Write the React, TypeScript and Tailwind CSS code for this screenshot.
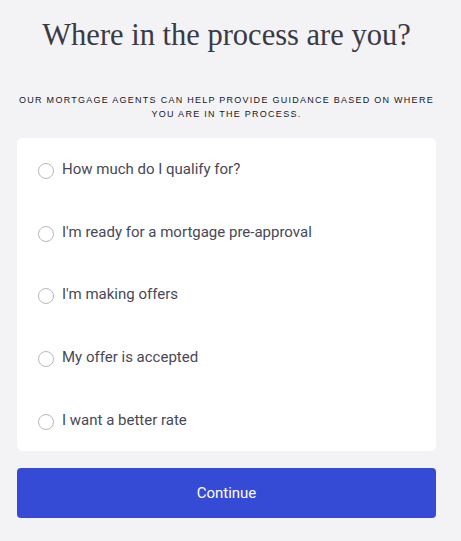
const options = [
  'How much do I qualify for?',
  "I'm ready for a mortgage pre-approval",
  "I'm making offers",
  'My offer is accepted',
  'I want a better rate',
];

export default function App() {
  return (
    <div className="min-h-[541px] w-full bg-[#f3f3f6] pl-[17px] pr-[25px] pt-[15px] pb-[23px]">
      <h1
        className="text-center text-[30.5px] leading-[40px] text-[#3b3a44]"
        style={{ fontFamily: '"Liberation Serif", serif' }}
      >
        Where in the process are you?
      </h1>

      <p
        className="mx-auto mt-[38px] text-center text-[9px] leading-[14px] tracking-[0.14em] text-[#16161c]"
        style={{ fontFamily: '"Liberation Sans", sans-serif' }}
      >
        OUR MORTGAGE AGENTS CAN HELP PROVIDE GUIDANCE BASED ON WHERE YOU ARE IN THE PROCESS.
      </p>

      <div className="mt-[17px] rounded-md bg-white" style={{ fontFamily: 'Roboto, sans-serif' }}>
        {options.map((o) => (
          <label key={o} className="flex h-[62.6px] items-center gap-[8px] pl-[21px]">
            <span className="mt-[4px] h-[16px] w-[16px] rounded-full border border-[#b8b8c0] bg-white" />
            <span className="text-[15px] leading-[20px] text-[#484857]">{o}</span>
          </label>
        ))}
      </div>

      <button
        className="mt-[17px] flex h-[50px] w-full items-center justify-center rounded-[4px] bg-[#354bd6] text-[15px] text-white"
        style={{ fontFamily: 'Roboto, sans-serif' }}
      >
        Continue
      </button>
    </div>
  );
}
